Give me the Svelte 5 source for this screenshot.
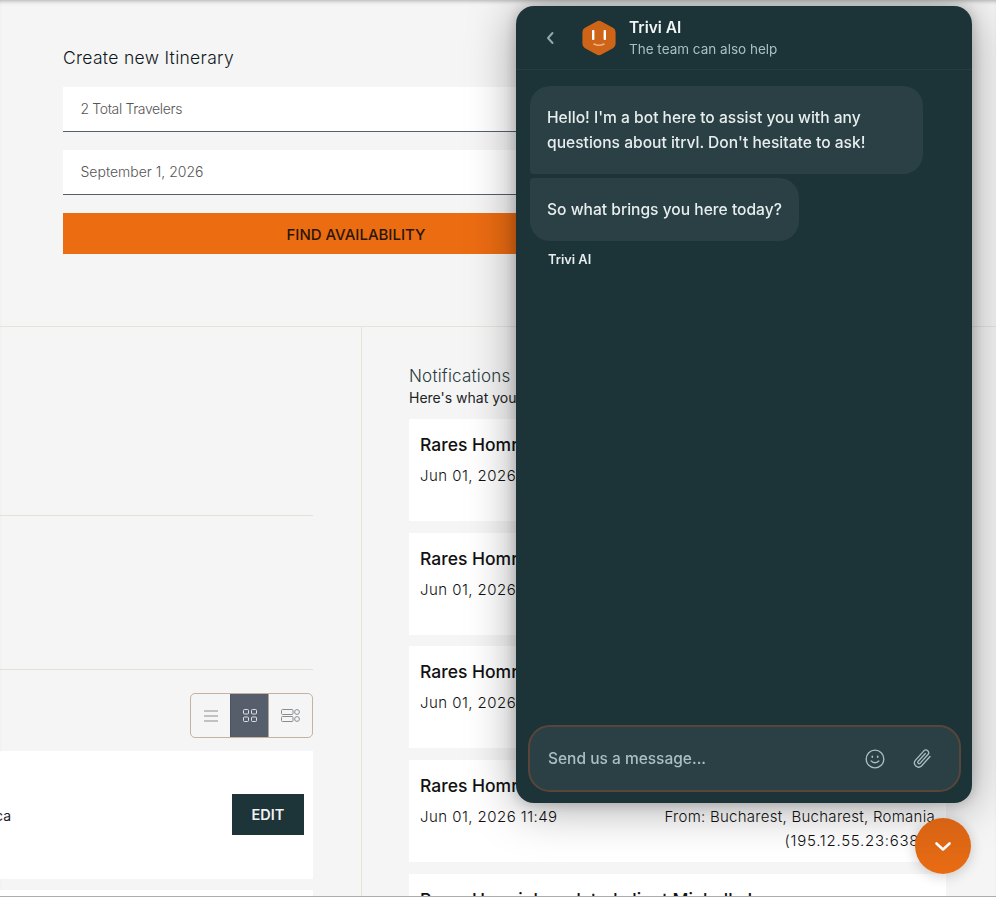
<script>
  const notifications = [
    { name: 'Rares Homrighausen logged in', date: 'Jun 01, 2026 11:49', from: 'From: Bucharest, Bucharest, Romania', ip: '(195.12.55.23:6386)' },
    { name: 'Rares Homrighausen logged in', date: 'Jun 01, 2026 11:49', from: 'From: Bucharest, Bucharest, Romania', ip: '(195.12.55.23:6386)' },
    { name: 'Rares Homrighausen logged in', date: 'Jun 01, 2026 11:49', from: 'From: Bucharest, Bucharest, Romania', ip: '(195.12.55.23:6386)' },
    { name: 'Rares Homrighausen logged in', date: 'Jun 01, 2026 11:49', from: 'From: Bucharest, Bucharest, Romania', ip: '(195.12.55.23:6386)' },
    { name: 'Rares Homrigh updated client Michelle L', date: 'Jun 01, 2026 11:49', from: '', ip: '' }
  ];
</script>

<div class="page">
  <section class="hero">
    <h1>Create new Itinerary</h1>
    <div class="field tight">2 Total Travelers</div>
    <div class="field">September 1, 2026</div>
    <button class="find">FIND AVAILABILITY</button>
  </section>

  <div class="columns">
    <div class="left">
      <div class="block first"></div>
      <div class="block second"></div>
      <div class="toolbar">
        <div class="toggle">
          <span class="tg">
            <svg width="14" height="12" viewBox="0 0 14 12" fill="none" stroke="#8a8d90" stroke-width="1"><path d="M0 1h14M0 6h14M0 11h14"/></svg>
          </span>
          <span class="tg on">
            <svg width="14" height="13" viewBox="0 0 14 13" fill="none" stroke="#dfe2e6" stroke-width="1"><rect x=".5" y=".5" width="5" height="4.5" rx="1"/><rect x="8.5" y=".5" width="5" height="4.5" rx="1"/><rect x=".5" y="8" width="5" height="4.5" rx="1"/><rect x="8.5" y="8" width="5" height="4.5" rx="1"/></svg>
          </span>
          <span class="tg grow">
            <svg width="19" height="13" viewBox="0 0 19 13" fill="none" stroke="#8a8d90" stroke-width="1"><rect x=".5" y=".5" width="11.5" height="5" rx="1"/><rect x=".5" y="7.5" width="11.5" height="5" rx="1"/><circle cx="16" cy="3" r="2.4"/><circle cx="16" cy="10" r="2.4"/></svg>
          </span>
        </div>
      </div>
      <div class="trip">
        <span class="dest">San Jose, Costa Rica</span>
        <button class="edit">EDIT</button>
      </div>
      <div class="trip"></div>
    </div>

    <div class="right">
      <h2>Notifications</h2>
      <p class="sub">Here's what you have missed</p>
      <ul class="list">
        {#each notifications as n}
          <li class="note">
            <div class="name">{n.name}</div>
            <div class="meta">
              <span class="date">{n.date}</span>
              <span class="from">{n.from}<br /><span class="ip">{n.ip}</span></span>
            </div>
          </li>
        {/each}
      </ul>
    </div>
  </div>
</div>

<aside class="chat">
  <header class="head">
    <svg class="back" width="10" height="14" viewBox="0 0 10 14" fill="none" stroke="#8fa9ad" stroke-width="2" stroke-linecap="round" stroke-linejoin="round"><path d="M7.5 2 3 7l4.5 5"/></svg>
    <svg class="avatar" width="34" height="36" viewBox="0 0 34 36">
      <path d="M14.6 1.4a5 5 0 0 1 4.8 0l11.6 6.4a5 5 0 0 1 2.6 4.4v11.6a5 5 0 0 1-2.6 4.4l-11.6 6.4a5 5 0 0 1-4.8 0L3 28.2a5 5 0 0 1-2.6-4.4V12.200a5 5 0 0 1 2.6-4.400z" fill="#cd6418"/>
      <rect x="10" y="10" width="2.400" height="10" rx=".8" fill="#fff"/>
      <rect x="21.600" y="10" width="2.400" height="10" rx=".8" fill="#fff"/>
      <path d="M12 24q5 2.600 10 0" fill="none" stroke="#f0b183" stroke-width="1.500" stroke-linecap="round"/>
    </svg>
    <div class="who">
      <strong>Trivi AI</strong>
      <span>The team can also help</span>
    </div>
  </header>

  <div class="messages">
    <div class="bubble wide">Hello! I'm a bot here to assist you with any questions about itrvl. Don't hesitate to ask!</div>
    <div class="bubble">So what brings you here today?</div>
    <div class="sender">Trivi AI</div>
  </div>

  <div class="composer">
    <span class="placeholder">Send us a message...</span>
    <svg width="20" height="20" viewBox="0 0 20 20" fill="none" stroke="#a9c0c2" stroke-width="1.300" stroke-linecap="round"><circle cx="10" cy="10" r="8.800"/><path d="M6.200 12q3.800 3.600 7.600 0"/><path d="M7.300 7.300v1M12.700 7.300v1" stroke-width="1.600"/></svg>
    <svg class="clip" width="22" height="22" viewBox="0 0 22 22" fill="none" stroke="#a9c0c2" stroke-width="1.300" stroke-linecap="round" stroke-linejoin="round"><path d="M19 8.500 10.500 18a4.200 4.200 0 0 1-6.200-5.600l8.800-9.800a2.800 2.800 0 0 1 4.100 3.700l-8.200 9.100a1.400 1.400 0 0 1-2-1.900l7.300-8"/></svg>
  </div>
</aside>

<button class="fab" aria-label="Close chat">
  <svg width="18" height="11" viewBox="0 0 18 11" fill="none" stroke="#fff" stroke-width="2.600" stroke-linecap="round" stroke-linejoin="round"><path d="M2.500 2.500 9 8.500l6.500-6"/></svg>
</button>

<style>
  :global(body) {
    margin: 0;
    background: #f5f5f5;
    overflow: hidden;
    font-family: Inter, "Liberation Sans", sans-serif;
  }
  .page {
    box-sizing: border-box;
    height: 897px;
    overflow: hidden;
    background: #f5f5f5;
    border-bottom: 1px solid #a9adab;
    box-shadow: inset 0 4px 4px -3px rgba(0, 0, 0, 0.3);
  }
  .hero {
    box-sizing: border-box;
    height: 327px;
    padding: 47px 0 0 63px;
    border-bottom: 1px solid #e8e3da;
  }
  h1 {
    margin: 0 0 19px;
    font-size: 17.500px;
    line-height: 21px;
    font-weight: 300;
    color: #10181b;
    letter-spacing: 0.3px;
  }
  .field {
    box-sizing: border-box;
    width: 586px;
    height: 45px;
    margin-bottom: 18px;
    padding: 0 18px 2px 17.500px;
    background: #fff;
    border-bottom: 1px solid #575f6b;
    display: flex;
    align-items: center;
    font-size: 14px;
    font-weight: 300;
    color: #555;
  }
  .field.tight {
    letter-spacing: -0.36px;
  }
  .find {
    display: block;
    width: 586px;
    height: 41px;
    padding: 1px 0 0;
    border: 0;
    background: #ec6c12;
    font: 500 15px Inter, sans-serif;
    color: #2a1608;
  }
  .columns {
    display: flex;
    align-items: flex-start;
  }
  .left {
    box-sizing: border-box;
    width: 362px;
    height: 569px;
    padding-right: 48px;
    border-right: 1px solid #e8e3da;
    overflow: hidden;
  }
  .block {
    border-bottom: 1px solid #e4e1d9;
  }
  .first {
    height: 188px;
  }
  .second {
    height: 153px;
  }
  .toolbar {
    display: flex;
    justify-content: flex-end;
    padding: 23px 0 13px;
  }
  .toggle {
    box-sizing: border-box;
    display: flex;
    width: 123px;
    height: 45px;
    border: 1px solid #c4b3a3;
    border-radius: 5px;
    overflow: hidden;
  }
  .tg {
    flex: 0 0 39px;
    box-sizing: border-box;
    display: flex;
    align-items: center;
    justify-content: center;
  }
  .tg.grow {
    flex: 1;
  }
  .tg.on {
    background: #565e6b;
    border-left: 1px solid #4c5460;
    border-right: 1px solid #b0a79b;
  }
  .trip {
    box-sizing: border-box;
    display: flex;
    justify-content: flex-end;
    align-items: center;
    height: 128px;
    margin-bottom: 11px;
    padding: 0 9px 2px 0;
    background: #fff;
    white-space: nowrap;
  }
  .dest {
    font-size: 14px;
    color: #1c2427;
    margin-right: 221px;
    padding-top: 2px;
  }
  .edit {
    width: 72px;
    height: 41px;
    padding: 1px 0 0;
    flex-shrink: 0;
    border: 0;
    background: #1d3439;
    color: #f2f2f2;
    font: 600 14.500px Inter, sans-serif;
  }
  .right {
    flex: 0 0 537px;
    margin-left: 47px;
    padding-top: 39px;
  }
  h2 {
    margin: 0;
    font-size: 17px;
    line-height: 20px;
    font-weight: 300;
    color: #2b3c41;
    letter-spacing: 0.2px;
  }
  .sub {
    margin: 3px 0 12px;
    font-size: 14px;
    line-height: 18px;
    color: #1c2427;
  }
  .list {
    list-style: none;
    margin: 0;
    padding: 0;
    display: flex;
    flex-direction: column;
    gap: 11.700px;
  }
  .note {
    box-sizing: border-box;
    height: 102px;
    padding: 15px 11px 0;
    background: #fff;
    white-space: nowrap;
  }
  .name {
    font-size: 17.500px;
    line-height: 22px;
    font-weight: 500;
    color: #111;
    margin-bottom: 8px;
  }
  .meta {
    display: flex;
    justify-content: space-between;
    align-items: flex-start;
    font-size: 15px;
    line-height: 24px;
    font-weight: 300;
    color: #111;
  }
  .date {
    letter-spacing: 0.45px;
  }
  .from {
    text-align: right;
    letter-spacing: 0.27px;
  }
  .ip {
    letter-spacing: 0.74px;
  }
  .chat {
    position: fixed;
    left: 516px;
    top: 6px;
    width: 456px;
    height: 797px;
    box-sizing: border-box;
    display: flex;
    flex-direction: column;
    background: #1c3338;
    border-radius: 18px;
    box-shadow: 0 4px 48px rgba(0, 0, 0, 0.36), 0 0 14px rgba(0, 0, 0, 0.2);
    overflow: hidden;
  }
  .head {
    box-sizing: border-box;
    flex: 0 0 64px;
    display: flex;
    align-items: center;
    padding-left: 29px;
    border-bottom: 1px solid #253d42;
  }
  .avatar {
    margin-left: 27px;
    margin-top: 1px;
  }
  .who {
    display: flex;
    flex-direction: column;
    margin-left: 13px;
    margin-top: 1px;
  }
  .who strong {
    font-size: 15.500px;
    line-height: 22px;
    font-weight: 600;
    color: #f2f5f5;
  }
  .who span {
    font-size: 13.500px;
    line-height: 20px;
    color: #a9c0c2;
  }
  .messages {
    flex: 1;
    padding: 16px 14px 0;
    display: flex;
    flex-direction: column;
    align-items: flex-start;
    gap: 4px;
  }
  .bubble {
    box-sizing: border-box;
    padding: 19px 17px;
    background: #2a4045;
    border-radius: 20px 20px 20px 4px;
    font-size: 15.600px;
    line-height: 25px;
    font-weight: 500;
    color: #e8eded;
  }
  .bubble + .bubble {
    border-radius: 4px 20px 20px 20px;
  }
  .bubble.wide {
    width: 393px;
    height: 88px;
    padding-top: 19px;
  }
  .sender {
    margin: 5px 0 0 18px;
    font-size: 12.800px;
    line-height: 20px;
    font-weight: 600;
    color: #e8eded;
  }
  .composer {
    box-sizing: border-box;
    align-self: flex-start;
    width: 433px;
    height: 67px;
    margin: 0 0 11px 12px;
    padding: 0 26px 0 18px;
    display: flex;
    align-items: center;
    background: #2a4045;
    border: 2px solid #58463a;
    border-radius: 22px;
  }
  .placeholder {
    flex: 1;
    font-size: 15.500px;
    font-weight: 500;
    color: #a9c0c2;
  }
  .clip {
    margin-left: 26px;
  }
  .fab {
    position: fixed;
    left: 915px;
    top: 818px;
    width: 56px;
    height: 56px;
    padding: 0;
    border: 0;
    border-radius: 50%;
    display: flex;
    align-items: center;
    justify-content: center;
    background: linear-gradient(180deg, #d66314, #e96c13);
    box-shadow: 0 2px 14px rgba(0, 0, 0, 0.2);
  }
</style>
